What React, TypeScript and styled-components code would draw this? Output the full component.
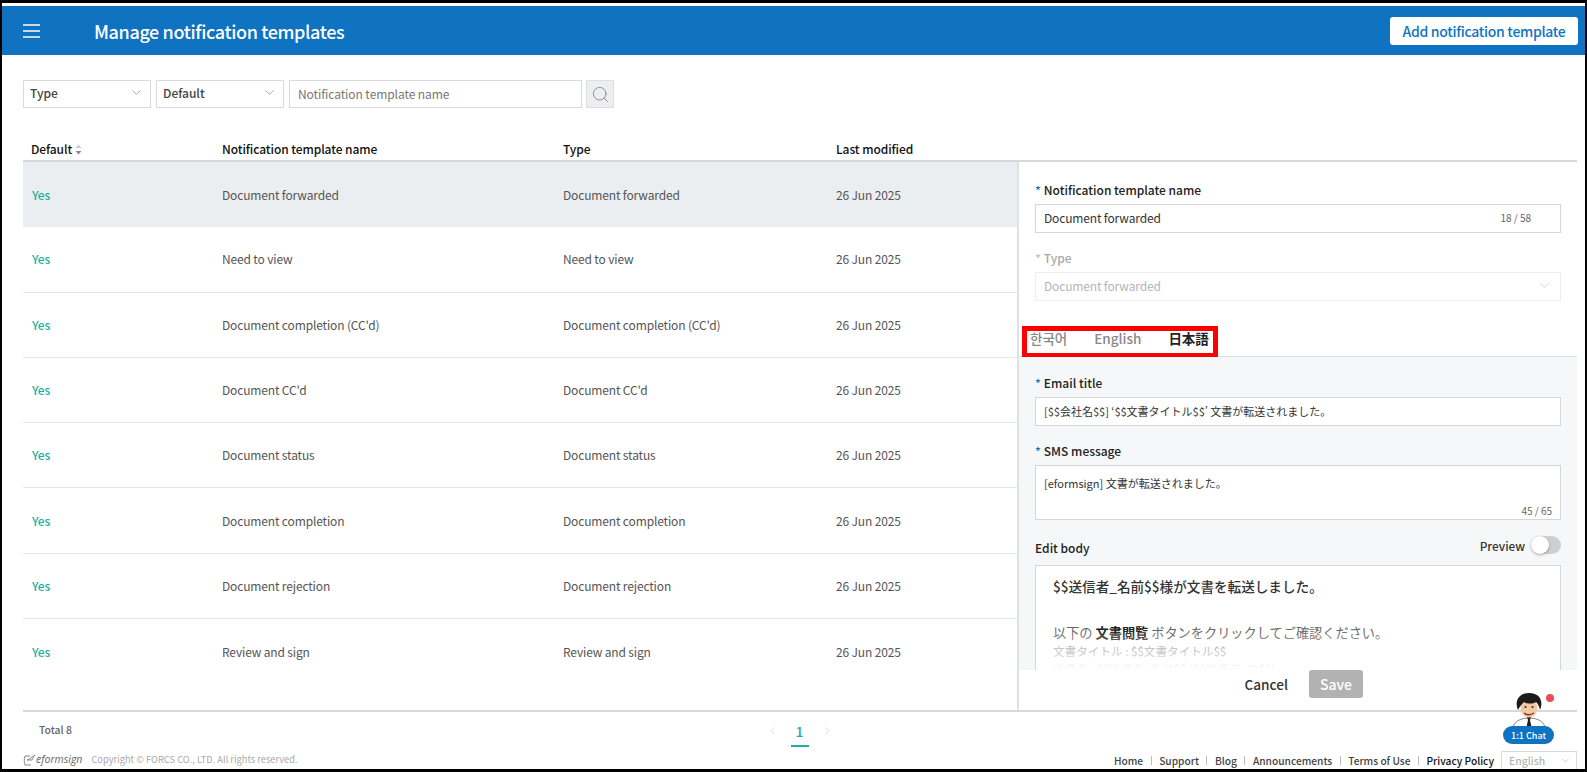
import React from "react";
import styled, { createGlobalStyle } from "styled-components";
import { ChevronDown, ChevronLeft, ChevronRight, Search } from "lucide-react";

const Global = createGlobalStyle`
  html, body { margin: 0; padding: 0; height: 772px; overflow: hidden; background: #000; }
  * { box-sizing: border-box; }
  body { font-family: "Noto Sans CJK KR", "Noto Sans", sans-serif; font-size: 12px; color: #333; }
`;

const Frame = styled.div`
  width: 1587px; height: 772px; padding: 3px 2px 3px 2px; background: #000;
`;
const Page = styled.div`
  width: 100%; height: 100%; background: #fff; padding-top: 3px; display: flex; flex-direction: column; overflow: hidden; position: relative;
`;
const Header = styled.header`
  height: 49px; flex: none; background: #0f73c1; display: flex; align-items: center; padding: 0 7px 0 21px; color: #fff;
`;
const Title = styled.h1`
  margin: 0 0 0 54px; font-size: 18px; font-weight: 500; flex: 1; letter-spacing: -0.37px;
`;
const AddButton = styled.button`
  height: 28px; width: 188px; border: 0; border-radius: 3px; background: #fff; color: #0f73c1; font: 500 14px "Noto Sans CJK KR", sans-serif; padding: 0; letter-spacing: -0.3px;
`;
const Filters = styled.div`
  display: flex; padding: 25px 0 0 21px; height: 53px; flex: none;
`;
const SelectBox = styled.div<{ $w: number }>`
  width: ${p => p.$w}px; height: 28px; border: 1px solid #d8dadd; display: flex; align-items: center; justify-content: space-between;
  padding: 0 6px 3px 6px; font-size: 12px; font-weight: 500; color: #444; margin-right: 5px; background: #fff;
`;
const NameInput = styled.div`
  width: 293px; height: 28px; border: 1px solid #d8dadd; display: flex; align-items: center; padding: 0 8px 2px; color: #777; font-size: 12px; letter-spacing: -0.08px;
`;
const SearchBtn = styled.div`
  width: 28px; height: 28px; margin-left: 4px; background: #eceef0; border: 1px solid #dcdee0; display: flex; align-items: center; justify-content: center; color: #777;
`;
const Main = styled.div`
  flex: 1; min-height: 0; display: flex; flex-direction: column; margin: 0 8px 0 21px; border-bottom: 2px solid #d9d9d9;
`;
const THead = styled.div`
  height: 54px; flex: none; border-bottom: 2px solid #d9d9d9; display: grid; grid-template-columns: 191px 341px 273px 1fr; align-items: end;
  padding: 0 0 2px 8px; font-weight: 500; font-size: 12px; color: #111; letter-spacing: -0.08px;
`;
const Th = styled.div`
  display: flex; align-items: center; gap: 3px; line-height: 18px;
`;
const SortIcon = styled.svg`
  width: 7px; height: 11px;
`;
const Split = styled.div`
  flex: 1; min-height: 0; display: flex;
`;
const ListPane = styled.div`
  width: 994px; flex: none; overflow: hidden;
`;
const Row = styled.div<{ $active?: boolean }>`
  height: 65.3px; display: grid; grid-template-columns: 191px 341px 273px 1fr; align-items: center; padding: 0 0 1px 8px;
  border-bottom: ${p => (p.$active ? "0" : "1px solid #e4e6e8")}; background: ${p => (p.$active ? "#ebeef1" : "#fff")}; color: #555; font-size: 12px; letter-spacing: -0.15px;
  &:last-child { border-bottom: 0; }
`;
const Yes = styled.span`
  color: #1bb0a3; font-weight: 500; margin-left: 1px;
`;
const Detail = styled.aside`
  flex: 1; min-width: 0; border-left: 2px solid #dfe1e3; position: relative; display: flex; flex-direction: column;
`;
const TopForm = styled.div`
  height: 164px; flex: none; padding: 19px 16px 0 16px; background: #fff;
`;
const Label = styled.div<{ $muted?: boolean }>`
  font-size: 12px; font-weight: 500; line-height: 18px; color: ${p => (p.$muted ? "#aaa" : "#222")}; margin-bottom: 5px;
`;
const Star = styled.span<{ $muted?: boolean }>`
  color: ${p => (p.$muted ? "#9ccbe9" : "#0f73c1")}; margin-right: 3px;
`;
const Field = styled.div<{ $muted?: boolean; $h?: number; $cjk?: boolean }>`
  flex: none; height: ${p => p.$h ?? 29}px; border: 1px solid ${p => (p.$muted ? "#eceef0" : "#d4d6d8")}; background: #fff; display: flex; justify-content: space-between;
  align-items: ${p => (p.$h ? "flex-start" : "center")}; padding: ${p => (p.$h ? "9px 8px 0 8px" : "0 8px 2px 8px")};
  color: ${p => (p.$muted ? "#b5b5b5" : "#333")}; font-size: ${p => (p.$cjk ? 11 : 12)}px; letter-spacing: ${p => (p.$cjk ? 0 : -0.15)}px; position: relative; margin-bottom: 16px;
`;
const Counter = styled.span<{ $bottom?: boolean }>`
  font-size: 10px; color: #666; letter-spacing: 0; margin-right: 21px; ${p => p.$bottom && "position: absolute; right: 8px; bottom: 1px; margin: 0;"}
`;
const TabsRow = styled.div`
  height: 31px; flex: none; position: relative; display: flex; align-items: center; padding: 0 0 7px 11px; gap: 27px; border-bottom: 1px solid #dcdee0;
  font-size: 13.5px;
`;
const Highlight = styled.div`
  position: absolute; left: 3px; top: 0; width: 196px; height: 32px; border: 5px solid #f00; pointer-events: none;
`;
const Tab = styled.span<{ $on?: boolean }>`
  color: ${p => (p.$on ? "#222" : "#888")}; font-weight: ${p => (p.$on ? 700 : 500)};
`;
const Gray = styled.div`
  flex: 1; min-height: 0; background: #f6f7f9; padding: 17px 16px 0 16px; display: flex; flex-direction: column; position: relative;
`;
const BodyHead = styled.div`
  flex: none; display: flex; justify-content: space-between; align-items: flex-start; height: 26px; margin-top: 3px;
`;
const PreviewWrap = styled.div`
  display: flex; align-items: center; gap: 6px; font-weight: 500; font-size: 11.8px; color: #333; margin-top: -3px;
`;
const Switch = styled.div`
  width: 30px; height: 18px; border-radius: 9px; background: #cfcfcf; position: relative;
`;
const Knob = styled.div`
  position: absolute; left: 0; top: 0; width: 18px; height: 18px; border-radius: 50%; background: #fff; box-shadow: 0 1px 3px rgba(0,0,0,.3);
`;
const Editor = styled.div`
  flex: 1; min-height: 0; background: #fff; border: 1px solid #d4d6d8; border-bottom: 0; padding: 9px 17px; overflow: hidden; position: relative;
`;
const EditorH = styled.div`
  font-size: 13.6px; font-weight: 500; color: #333; line-height: 22px; margin-bottom: 26px;
`;
const EditorP = styled.div`
  font-size: 13.2px; color: #666; line-height: 19px;
  b { color: #222; font-weight: 700; }
`;
const EditorS = styled.div`
  font-size: 11.6px; color: #888; line-height: 18px;
`;
const Fade = styled.div`
  position: absolute; left: 0; right: 0; bottom: 0; height: 40px; background: linear-gradient(rgba(255,255,255,0), #fff);
`;
const Actions = styled.div`
  height: 40px; flex: none; background: #fff; display: flex; justify-content: flex-end; padding: 0 214px 0 0; align-items: flex-start; gap: 21px;
`;
const Cancel = styled.button`
  height: 28px; background: none; border: 0; padding: 0; font: 500 13.6px "Noto Sans CJK KR", sans-serif; color: #333;
`;
const Save = styled.button`
  width: 54px; height: 28px; border: 0; border-radius: 3px; background: #b2b2b2; color: #fff; font: 500 14px "Noto Sans CJK KR", sans-serif; padding: 0;
`;
const Pager = styled.div`
  height: 40px; flex: none; margin: 0 8px 0 21px; display: grid; grid-template-columns: 1fr auto 1fr; align-items: center; padding: 0 0 0 16px; font-size: 10.4px; color: #666; font-weight: 500;
`;
const TotalText = styled.span`
  margin-bottom: 6px;
`;
const Pages = styled.div`
  display: flex; align-items: center; gap: 11px; color: #d0d0d0; margin: 0 0 2px -17px;
`;
const PageNo = styled.div`
  width: 18px; height: 28px; text-align: center; font-size: 14px; font-weight: 500; color: #1bb0a3; border-bottom: 2px solid #1bb0a3; line-height: 24px; margin-top: 3px;
`;
const Footer = styled.footer`
  height: 17px; flex: none; display: flex; align-items: flex-start; justify-content: space-between; padding: 0 8px 0 21px; position: relative;
`;
const Brand = styled.div`
  display: flex; align-items: center; gap: 9px; font-size: 9.3px; color: #aaa; line-height: 15px;
`;
const Logo = styled.span`
  font-family: "Open Sans", sans-serif; font-style: italic; font-size: 10.5px; color: #666; display: flex; align-items: center;
`;
const Links = styled.div`
  display: flex; align-items: center; height: 18px; font-size: 10.2px; font-weight: 500; color: #444; margin-top: -1px;
`;
const FootLink = styled.span<{ $strong?: boolean }>`
  color: ${p => (p.$strong ? "#111" : "#444")};
  span + &::before { content: ""; display: inline-block; width: 1px; height: 9px; background: #bbb; margin: 0 7.5px; }
`;
const LangSelect = styled.div`
  width: 76px; height: 19px; margin-left: 7px; border: 1px solid #d8dadd; display: flex; align-items: center; justify-content: space-between; padding: 0 5px 0 7px; color: #b5b5b5; font-size: 10.4px;
`;
const ChatWidget = styled.div`
  position: absolute; left: 1501px; top: 690px; width: 54px; height: 51px;
`;
const ChatPill = styled.div`
  position: absolute; left: 0; bottom: 0; width: 51px; height: 18px; border-radius: 9px; background: #0f73c1; color: #fff; font-size: 9px; font-weight: 500; display: flex; align-items: center; justify-content: center;
`;
const RedDot = styled.div`
  position: absolute; left: 43px; top: 1px; width: 8px; height: 8px; border-radius: 50%; background: #ee4a52;
`;
const Avatar = styled.svg`
  position: absolute; left: 4px; top: 0;
`;

const names = ["Document forwarded", "Need to view", "Document completion (CC'd)", "Document CC'd", "Document status", "Document completion", "Document rejection", "Review and sign"];

function Caret() {
  return <ChevronDown size={15} strokeWidth={1} color="#777" />;
}

export default function App() {
  return (
    <>
      <Global />
      <Frame>
        <Page>
          <Header>
            <svg width="17" height="14" viewBox="0 0 17 14" stroke="#fff" strokeWidth="1.5">
              <path d="M0 1h17M0 7h17M0 13h17" />
            </svg>
            <Title>Manage notification templates</Title>
            <AddButton>Add notification template</AddButton>
          </Header>
          <Filters>
            <SelectBox $w={128}>Type<Caret /></SelectBox>
            <SelectBox $w={128}>Default<Caret /></SelectBox>
            <NameInput>Notification template name</NameInput>
            <SearchBtn><Search size={19} strokeWidth={1} /></SearchBtn>
          </Filters>
          <Main>
            <THead>
              <Th>Default
                <SortIcon viewBox="0 0 7 11"><path d="M3.5 0.500 6.500 4H.5z" fill="#ccc" /><path d="M3.5 10.500 6.500 7H.5z" fill="#888" /></SortIcon>
              </Th>
              <Th>Notification template name</Th>
              <Th>Type</Th>
              <Th>Last modified</Th>
            </THead>
            <Split>
              <ListPane>
                {names.map((n, i) => (
                  <Row key={n} $active={i === 0}>
                    <Yes>Yes</Yes>
                    <span>{n}</span>
                    <span>{n}</span>
                    <span>26 Jun 2025</span>
                  </Row>
                ))}
              </ListPane>
              <Detail>
                <TopForm>
                  <Label><Star>*</Star>Notification template name</Label>
                  <Field>Document forwarded<Counter>18 / 58</Counter></Field>
                  <Label $muted><Star $muted>*</Star>Type</Label>
                  <Field $muted>Document forwarded<ChevronDown size={15} strokeWidth={1} color="#bbb" /></Field>
                </TopForm>
                <TabsRow>
                  <Highlight />
                  <Tab>한국어</Tab>
                  <Tab>English</Tab>
                  <Tab $on lang="ja">日本語</Tab>
                </TabsRow>
                <Gray lang="ja">
                  <Label><Star>*</Star>Email title</Label>
                  <Field $cjk>[$$会社名$$] ‘$$文書タイトル$$’ 文書が転送されました。</Field>
                  <Label><Star>*</Star>SMS message</Label>
                  <Field $cjk $h={55}>[eformsign] 文書が転送されました。<Counter $bottom>45 / 65</Counter></Field>
                  <BodyHead>
                    <Label>Edit body</Label>
                    <PreviewWrap>Preview<Switch><Knob /></Switch></PreviewWrap>
                  </BodyHead>
                  <Editor>
                    <EditorH>$$送信者_名前$$様が文書を転送しました。</EditorH>
                    <EditorP>以下の <b>文書閲覧</b> ボタンをクリックしてご確認ください。</EditorP>
                    <EditorS>文書タイトル : $$文書タイトル$$</EditorS>
                    <EditorS>送信者 : $$送信者_名前$$ ($$送信者_ID$$)</EditorS>
                    <Fade />
                  </Editor>
                </Gray>
                <Actions>
                  <Cancel>Cancel</Cancel>
                  <Save>Save</Save>
                </Actions>
              </Detail>
            </Split>
          </Main>
          <Pager>
            <TotalText>Total 8</TotalText>
            <Pages>
              <ChevronLeft size={14} strokeWidth={1.2} />
              <PageNo>1</PageNo>
              <ChevronRight size={14} strokeWidth={1.2} />
            </Pages>
            <span />
          </Pager>
          <Footer>
            <Brand>
              <Logo>
                <svg width="13" height="12" viewBox="0 0 13 12" fill="none" stroke="#777" strokeWidth="0.9">
                  <path d="M7 2H2C1 5 1 8 2 11H8" />
                  <path d="M4 6c3-1 5-3 8-5-2 2-2 3-3 5-1.500 0-3 0-5 0z" />
                </svg>
                eformsign
              </Logo>
              Copyright © FORCS CO., LTD. All rights reserved.
            </Brand>
            <Links>
              <FootLink>Home</FootLink>
              <FootLink>Support</FootLink>
              <FootLink>Blog</FootLink>
              <FootLink>Announcements</FootLink>
              <FootLink>Terms of Use</FootLink>
              <FootLink $strong>Privacy Policy</FootLink>
              <LangSelect>English<ChevronDown size={11} strokeWidth={1} color="#999" /></LangSelect>
            </Links>
          </Footer>
          <ChatWidget>
            <RedDot />
            <Avatar width="44" height="34" viewBox="0 0 44 34">
              <path d="M6 34c2-6 8-9 16-9s14 3 16 9z" fill="#fff" stroke="#333" strokeWidth=".6" />
              <path d="M20 24h4l-1 3 1.500 7h-5l1.500-7z" fill="#222" />
              <ellipse cx="22" cy="15" rx="8.500" ry="9.500" fill="#f2c9a5" />
              <path d="M11 17C7 8 12 0 22 0s15 7 11 17c-1-4-2-6-4-8-3 2-9 2-12 0-2 2-4 4-6 8z" fill="#1d1a1a" />
              <circle cx="18.500" cy="14" r="1" fill="#222" />
              <circle cx="25.500" cy="14" r="1" fill="#222" />
              <path d="M17 20c3 2 7 2 10 0" stroke="#7a3a2a" strokeWidth="1.500" fill="none" />
            </Avatar>
            <ChatPill>1:1 Chat</ChatPill>
          </ChatWidget>
        </Page>
      </Frame>
    </>
  );
}
